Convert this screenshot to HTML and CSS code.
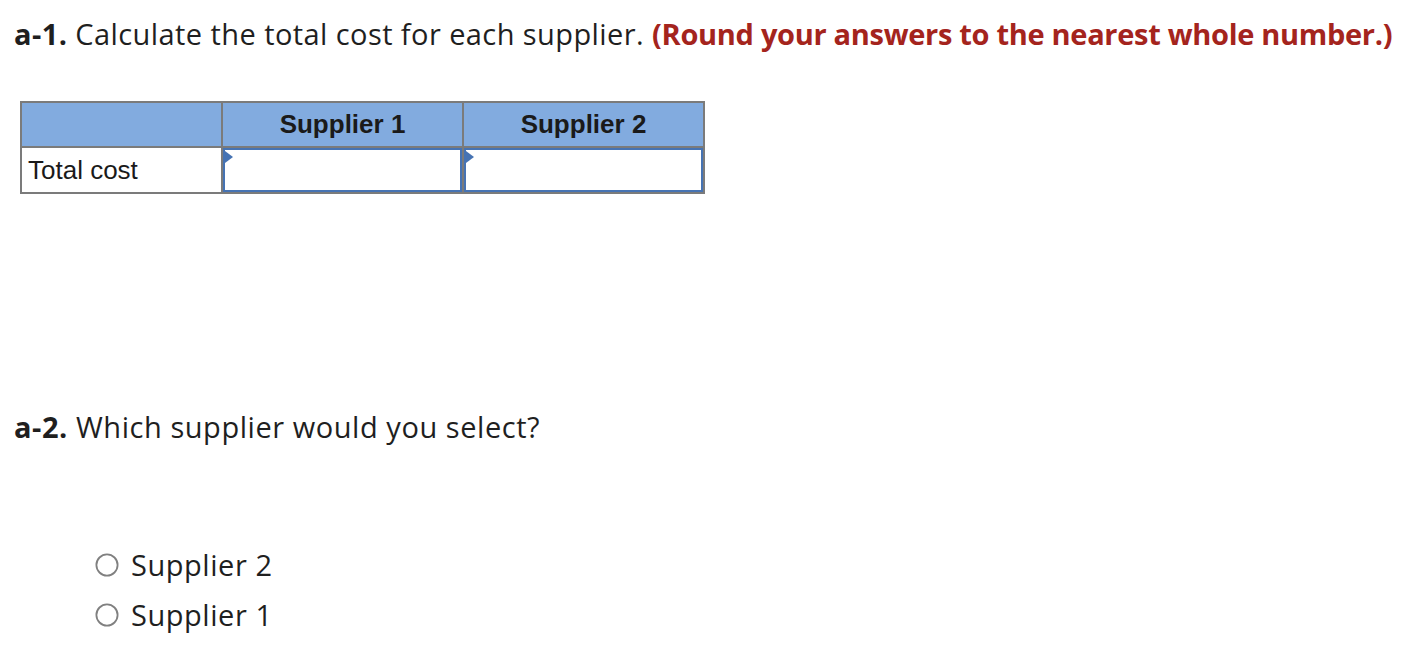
FILE: index.html
```html
<!DOCTYPE html>
<html lang="en">
<head>
<meta charset="utf-8">
<title>Supplier question</title>
<link rel="stylesheet" href="styles.css">
</head>
<body>
<div class="page">
  <p class="q q1"><b>a-1.</b> Calculate the total cost for each supplier. <span class="hint">(Round your answers to the nearest whole number.)</span></p>

  <div class="grid">
    <div class="cell head"></div>
    <div class="cell head">Supplier 1</div>
    <div class="cell head">Supplier 2</div>
    <div class="cell label">Total cost</div>
    <div class="cell entry"><span class="input"><span class="flag"></span></span></div>
    <div class="cell entry"><span class="input"><span class="flag"></span></span></div>
  </div>

  <p class="q q2"><b>a-2.</b> Which supplier would you select?</p>

  <div class="options">
    <label class="opt"><svg class="radio" viewBox="0 0 24 24" width="24" height="24"><circle cx="12" cy="12" r="10.6" fill="#fff" stroke="#808080" stroke-width="1.8"/></svg><span>Supplier 2</span></label>
    <label class="opt"><svg class="radio" viewBox="0 0 24 24" width="24" height="24"><circle cx="12" cy="12" r="10.6" fill="#fff" stroke="#808080" stroke-width="1.8"/></svg><span>Supplier 1</span></label>
  </div>
</div>
</body>
</html>
```

FILE: styles.css
```css
html, body {
  margin: 0;
  padding: 0;
  background: #fff;
}

.page {
  padding: 0 0 0 14px;
  font-family: "Open Sans", Lato, sans-serif;
  color: #1f1f1f;
}

.q {
  margin: 0;
  font-size: 29px;
  line-height: 36px;
  letter-spacing: 0.55px;
  white-space: nowrap;
}

.q b {
  font-weight: 700;
}

.q1 {
  padding-top: 16px;
  letter-spacing: 0.42px;
}

.hint {
  color: #a4241d;
  font-weight: 700;
  letter-spacing: -0.3px;
}

.grid {
  display: grid;
  grid-template-columns: 199px 239px 239px;
  grid-template-rows: 43px 44px;
  gap: 2px;
  padding: 2px;
  background: #7b7b7b;
  width: max-content;
  margin: 49px 0 0 6px;
  font-family: "Liberation Sans", Arial, sans-serif;
}

.cell {
  display: flex;
  align-items: center;
  font-size: 26px;
  color: #1a1a1a;
}

.head {
  background: #82abdf;
  justify-content: center;
  font-weight: 700;
}

.label {
  background: #fff;
  padding-left: 6px;
}

.entry {
  background: #fff;
  align-items: stretch;
}

.input {
  flex: 1;
  border: 2px solid #4673b3;
  position: relative;
  background: #fff;
}

.flag {
  position: absolute;
  left: 0;
  top: 1px;
  width: 0;
  height: 0;
  border-top: 6px solid transparent;
  border-bottom: 6px solid transparent;
  border-left: 8px solid #4673b3;
}

.q2 {
  margin-top: 215px;
}

.options {
  display: flex;
  flex-direction: column;
  gap: 14px;
  margin: 102px 0 0 81px;
}

.opt {
  display: flex;
  align-items: center;
  gap: 12px;
  font-size: 29px;
  line-height: 36px;
  letter-spacing: 0.55px;
}

.radio {
  display: block;
  flex: none;
}
```
